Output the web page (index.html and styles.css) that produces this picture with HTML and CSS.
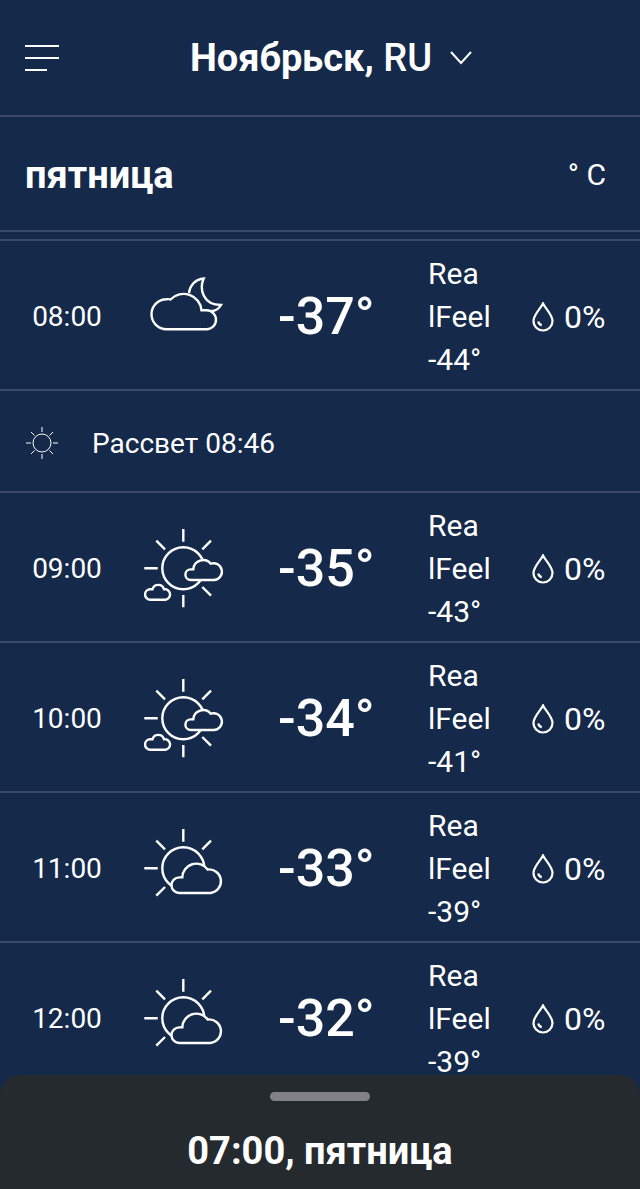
FILE: index.html
```html
<!DOCTYPE html>
<html lang="ru">
  <head>
    <meta charset="UTF-8" />
    <meta name="viewport" content="width=device-width, initial-scale=1.0" />
    <title>Ноябрьск, RU</title>
    <link rel="stylesheet" href="styles.css">
  </head>
  <body>
    <!-- shared icons -->
    <svg class="sprite" aria-hidden="true">
      <symbol id="drop" viewBox="0 0 22 30" stroke-width="2.2">
        <path d="M11 1.5C9 6 1.5 12.5 1.5 19a9.5 9.5 0 0 0 19 0C20.5 12.5 13 6 11 1.5z" />
        <path d="M6.300 19.500c.3 2 1.500 3.300 3.500 3.700" />
      </symbol>
      <symbol id="cloud-moon" viewBox="0 0 80 80" stroke-width="2.4">
        <path d="M45 16C46 8 52 2 59.7 1.5C55 12 59 28 77 28C75 31.5 72 34 67.5 34" />
        <path d="M22.5 52.3a15 15 0 1 1 0-30q2.500-.4 4 .2A18 18 0 0 1 57.5 33.3h5a9.500 9.500 0 0 1 0 19z" />
      </symbol>
      <symbol id="sun-clouds" viewBox="0 0 80 80" stroke-width="2.4">
        <circle cx="39.3" cy="39.3" r="21" />
        <path d="M39.3 0v12.7M.3 39.3h13.4M12.3 11.7l8.7 8.6M67 11.7l-8.7 8.6M58.3 58l8.7 8.7M39.3 66v12.3" />
        <path class="cloud" d="M46.7 51a5.3 5.3 0 0 1 0-10.6h2.6A9.8 9.8 0 0 1 66.7 34.7A8.4 8.4 0 1 1 70 51z" />
        <path class="cloud" d="M6.3 70.7a5 5 0 0 1 0-10.500h2.2a6 6 0 0 1 11.500 0a5.300 5.300 0 0 1 1.500 10.500z" />
      </symbol>
      <symbol id="sun-cloud" viewBox="0 0 80 80" stroke-width="2.4">
        <circle cx="39.3" cy="39.3" r="21" />
        <path d="M39.3 0v12.7M.3 39.3h13.4M12.3 11.7l8.7 8.6M67 11.7l-8.7 8.6M12.3 66.7l8.7-8.700" />
        <path class="cloud" d="M35.3 64a7.8 7.8 0 0 1 0-15.6h3A14 14 0 0 1 63.7 40.5A11.8 11.8 0 1 1 66.5 64z" />
      </symbol>
    </svg>

    <header class="topbar">
      <button class="menu" aria-label="Меню">
        <svg viewBox="0 0 34 26"><path d="M0 1h34M0 13h34M0 25h22" /></svg>
      </button>
      <button class="location">
        <span><b>Ноябрьск,</b> RU</span>
        <svg viewBox="0 0 22 14"><path d="M1 1l10 11L21 1" /></svg>
      </button>
    </header>

    <div class="day">
      <h1>пятница</h1>
      <span>° C</span>
    </div>

    <ul class="hours">
      <li class="hour">
        <span class="time">08:00</span>
        <svg class="weather"><use href="#cloud-moon" /></svg>
        <span class="temp">-37°</span>
        <span class="feel">Rea<br>lFeel<br>-44°</span>
        <span class="rain"><svg><use href="#drop" /></svg>0%</span>
      </li>
      <li class="sunrise">
        <svg viewBox="0 0 32 32">
          <circle cx="16" cy="16" r="9" />
          <path d="M16 0v5M16 27v5M0 16h5M27 16h5M5 5l3.5 3.5M23.5 23.5L27 27M27 5l-3.5 3.5M8.5 23.5L5 27" />
        </svg>
        <span>Рассвет 08:46</span>
      </li>
      <li class="hour">
        <span class="time">09:00</span>
        <svg class="weather"><use href="#sun-clouds" /></svg>
        <span class="temp">-35°</span>
        <span class="feel">Rea<br>lFeel<br>-43°</span>
        <span class="rain"><svg><use href="#drop" /></svg>0%</span>
      </li>
      <li class="hour">
        <span class="time">10:00</span>
        <svg class="weather"><use href="#sun-clouds" /></svg>
        <span class="temp">-34°</span>
        <span class="feel">Rea<br>lFeel<br>-41°</span>
        <span class="rain"><svg><use href="#drop" /></svg>0%</span>
      </li>
      <li class="hour">
        <span class="time">11:00</span>
        <svg class="weather"><use href="#sun-cloud" /></svg>
        <span class="temp">-33°</span>
        <span class="feel">Rea<br>lFeel<br>-39°</span>
        <span class="rain"><svg><use href="#drop" /></svg>0%</span>
      </li>
      <li class="hour">
        <span class="time">12:00</span>
        <svg class="weather"><use href="#sun-cloud" /></svg>
        <span class="temp">-32°</span>
        <span class="feel">Rea<br>lFeel<br>-39°</span>
        <span class="rain"><svg><use href="#drop" /></svg>0%</span>
      </li>
    </ul>

    <footer class="sheet">
      <div class="handle"></div>
      <p>07:00, пятница</p>
    </footer>
  </body>
</html>
```
FILE: styles.css
```css
* {
  box-sizing: border-box;
}

body {
  margin: 0;
  height: 100vh;
  display: flex;
  flex-direction: column;
  font-family: Roboto, sans-serif;
  font-size: 30px;
  color: #fff;
  background-color: #15294a;
}

svg {
  display: block;
  flex: none;
  fill: none;
  stroke: #fff;
  stroke-width: 2;
}

button {
  padding: 0;
  border: 0;
  background: none;
  color: inherit;
  font: inherit;
  cursor: pointer;
}

.sprite {
  position: absolute;
  width: 0;
  height: 0;
}

.topbar {
  flex: none;
  display: grid;
  grid-template-columns: 1fr auto 1fr;
  align-items: center;
  padding: 0 25px;
  height: 117px;
  border-bottom: 2px solid #3a4a6a;
}

.menu svg {
  width: 34px;
  height: 26px;
}

.location {
  display: flex;
  align-items: center;
  gap: 18px;
  padding-left: 22px;
  font-size: 38px;
  font-weight: 500;
}

.location svg {
  width: 22px;
  height: 14px;
}

.day {
  flex: none;
  display: flex;
  justify-content: space-between;
  align-items: center;
  padding: 2px 34px 0 25px;
  height: 115px;
  border-bottom: 2px solid #3a4a6a;
}

.day h1 {
  margin: 0;
  font-size: 38px;
}

.hours {
  flex: 1;
  min-height: 0;
  margin: 7px 0 0;
  padding: 0;
  list-style: none;
  overflow-y: auto;
  scrollbar-width: none;
  border-top: 2px solid #3a4a6a;
}

.hour {
  display: grid;
  grid-template-columns: 134fr 144fr 150fr 104fr 108fr;
  align-items: center;
  height: 150px;
  padding-top: 3px;
  border-bottom: 2px solid #3a4a6a;
}

.time {
  font-size: 28px;
  text-align: center;
}

.weather {
  width: 80px;
  height: 80px;
  margin-left: 10px;
  overflow: visible;
}

.cloud {
  fill: #15294a;
}

.temp {
  font-size: 52px;
  font-weight: 500;
}

.feel {
  line-height: 43px;
}

.rain {
  display: flex;
  align-items: center;
  gap: 10px;
  font-size: 32px;
}

.rain svg {
  width: 22px;
  height: 30px;
}

.sunrise {
  display: flex;
  align-items: center;
  gap: 34px;
  height: 102px;
  padding: 4px 26px 0;
  font-size: 28px;
  border-bottom: 2px solid #3a4a6a;
}

.sunrise svg {
  width: 32px;
  height: 32px;
  stroke-width: 1;
}

.sheet {
  flex: none;
  display: flex;
  flex-direction: column;
  align-items: center;
  gap: 26px;
  height: 114px;
  padding-top: 17px;
  border-radius: 20px 20px 0 0;
  background-color: #252a2e;
}

.handle {
  width: 100px;
  height: 9px;
  border-radius: 5px;
  background-color: #828286;
}

.sheet p {
  margin: 0;
  font-size: 38px;
  line-height: 48px;
  font-weight: 700;
}
```
